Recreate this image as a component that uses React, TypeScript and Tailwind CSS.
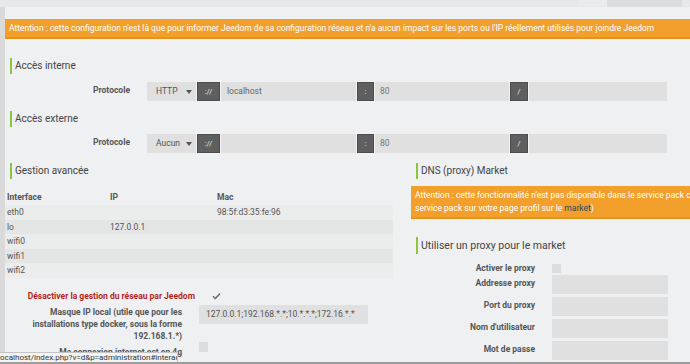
import React from "react";

const ROWS = [
  { name: "eth0", ip: "", mac: "98:5f:d3:35:fe:96" },
  { name: "lo", ip: "127.0.0.1", mac: "" },
  { name: "wifi0", ip: "", mac: "" },
  { name: "wifi1", ip: "", mac: "" },
  { name: "wifi2", ip: "", mac: "" },
];

function Heading({ children, big }: { children: React.ReactNode; big?: boolean }) {
  return (
    <div
      className={`ml-[5px] border-l-2 border-[#8cc63f] pl-[3px] text-[#444] ${
        big ? "h-[17px] text-[10.5px] leading-[17px]" : "h-[16px] text-[10px] leading-[16px]"
      }`}
    >
      {children}
    </div>
  );
}

function Addon({ children, w }: { children: React.ReactNode; w: string }) {
  return (
    <div
      className={`${w} h-full bg-[#5f5f5f] border border-[#4b4b4b] ring-1 ring-[#f4f4f4] flex items-center justify-center text-[#e6e6e6] text-[8px]`}
    >
      {children}
    </div>
  );
}

function UrlGroup({ proto, host }: { proto: string; host: string }) {
  return (
    <div className="flex h-[19px]">
      <div className="w-[125px] pt-[2px] text-right font-bold text-[8.5px] text-[#555]">Protocole</div>
      <div className="ml-[17px] w-[520px] h-full flex bg-[#dfe0df]">
        <div className="w-[50px] h-full flex items-center pl-[9px] text-[8.5px] text-[#555]">
          <span>{proto}</span>
          <span className="ml-auto mr-[5px] w-0 h-0 border-l-[3px] border-r-[3px] border-t-[4px] border-l-transparent border-r-transparent border-t-[#555]" />
        </div>
        <Addon w="w-[23px]">://</Addon>
        <div className="w-[137px] h-full flex items-center pl-[7px] text-[8.5px] text-[#666]">{host}</div>
        <Addon w="w-[17px]">:</Addon>
        <div className="w-[136px] h-full flex items-center pl-[6px] text-[8.5px] text-[#777]">80</div>
        <Addon w="w-[18px]">/</Addon>
        <div className="flex-1" />
      </div>
    </div>
  );
}

function ProxyField({ label }: { label: string }) {
  return (
    <div className="flex h-[19px] mt-[3px]">
      <div className="w-[124px] pt-[2px] text-right font-bold text-[8.5px] text-[#555]">{label}</div>
      <div className="ml-[17px] w-[116px] h-full bg-[#dfe0df]" />
    </div>
  );
}

export default function App() {
  return (
    <div className="relative w-[690px] h-[364px] overflow-hidden bg-[#eff0f2] font-['Roboto',sans-serif]">
      {/* top strip with tab edges */}
      <div className="h-[7px] bg-[#e7e8e9] flex">
        <div className="ml-[578px] w-[29px] h-[6px] bg-[#ebebeb]" />
        <div className="w-[75px] h-[7px] bg-[#dcdddd]" />
      </div>

      <div className="flex">
        <div className="w-[5px] bg-[#dadada] self-stretch" />
        <div className="flex-1 min-w-0">
          {/* warning banner */}
          <div className="mt-[12px] h-[20px] bg-[#f2a02b] border-b-2 border-[#e69419] pl-[4px] flex items-center text-white text-[8.5px] whitespace-nowrap">
            Attention : cette configuration n'est là que pour informer Jeedom de sa configuration réseau et n'a aucun impact sur les ports ou l'IP réellement utilisés pour joindre Jeedom
          </div>

          <div className="mt-[19px]">
            <Heading>Accès interne</Heading>
          </div>
          <div className="mt-[8px]">
            <UrlGroup proto="HTTP" host="localhost" />
          </div>

          <div className="mt-[10px]">
            <Heading>Accès externe</Heading>
          </div>
          <div className="mt-[7px]">
            <UrlGroup proto="Aucun" host="" />
          </div>

          <div className="mt-[10px] flex">
            {/* left column */}
            <div className="w-[388px] shrink-0">
              <Heading>Gestion avancée</Heading>
              <div className="mt-[10px] text-[8.5px]">
                <div className="h-[16px] flex items-center font-bold text-[#555]">
                  <div className="w-[105px] pl-[2px]">Interface</div>
                  <div className="w-[107px]">IP</div>
                  <div>Mac</div>
                </div>
                {ROWS.map((r, i) => (
                  <div
                    key={r.name}
                    className={`h-[14.6px] flex items-center text-[#555] ${
                      i % 2 === 0 ? "bg-[#ebecec]" : "bg-[#e4e5e5]"
                    }`}
                  >
                    <div className="w-[105px] pl-[2px]">{r.name}</div>
                    <div className="w-[107px]">{r.ip}</div>
                    <div>{r.mac}</div>
                  </div>
                ))}
              </div>

              <div className="mt-[12px] flex h-[12px] items-center">
                <div className="w-[190px] text-right font-bold text-[8.5px] text-[#b3261e]">Désactiver la gestion du réseau par Jeedom</div>
                <svg className="ml-[17px]" width="9" height="8" viewBox="0 0 9 8">
                  <path d="M1 4.2 L3.4 6.5 L8 1.5" fill="none" stroke="#666" strokeWidth="1.4" />
                </svg>
              </div>

              <div className="mt-[3px] flex">
                <div className="w-[177px] text-right font-bold text-[8.5px] leading-[12px] text-[#555] pt-[1px]">
                  Masque IP local (utile que pour les installations type docker, sous la forme 192.168.1.*)
                </div>
                <div className="ml-[17px] w-[169px] h-[19px] bg-[#dfe0df] flex items-center pl-[7px] text-[8.5px] text-[#555]">
                  127.0.0.1;192.168.*.*;10.*.*.*;172.16.*.*
                </div>
              </div>

              <div className="mt-[4px] flex">
                <div className="w-[177px] text-right font-bold text-[8.5px] leading-[12px] text-[#555]">Ma connexion internet est en 4g</div>
                <div className="ml-[17px] mt-[-4px] w-[9px] h-[10px] bg-[#dcdcdc]" />
              </div>
            </div>

            {/* right column */}
            <div className="ml-[18px] flex-1 min-w-0">
              <Heading>DNS (proxy) Market</Heading>
              <div className="mt-[7px] h-[33px] bg-[#f2a02b] border-b-2 border-[#e69419] pl-[4px] pt-[3px] text-white text-[8.5px] leading-[13px] overflow-hidden whitespace-nowrap">
                <div>Attention : cette fonctionnalité n'est pas disponible dans le service pack community (voir votre</div>
                <div>
                  service pack sur votre page profil sur le <span className="text-[#34495e]">market</span>)
                </div>
              </div>

              <div className="mt-[18px]">
                <Heading big>Utiliser un proxy pour le market</Heading>
              </div>

              <div className="mt-[9px] flex h-[11px] items-center">
                <div className="w-[124px] text-right font-bold text-[8.5px] text-[#555]">Activer le proxy</div>
                <div className="ml-[17px] w-[9px] h-[9px] bg-[#dcdcdc]" />
              </div>
              <div className="-mt-[2px]">
                <ProxyField label="Addresse proxy" />
                <ProxyField label="Port du proxy" />
                <ProxyField label="Nom d'utilisateur" />
                <ProxyField label="Mot de passe" />
              </div>
            </div>
          </div>
        </div>
      </div>

      {/* browser status bubble */}
      <div className="absolute left-0 bottom-[2px] h-[10px] w-[178px] bg-[#f3f3f3] border-t border-r border-[#c4c4c4] flex items-center text-[8px] text-[#333] whitespace-nowrap overflow-hidden">
        <span className="-ml-[2px]">localhost/index.php?v=d&amp;p=administration#interacttab</span>
      </div>
      <div className="absolute left-0 bottom-0 w-full h-[2px] bg-[#9c9c9c]" />
    </div>
  );
}
